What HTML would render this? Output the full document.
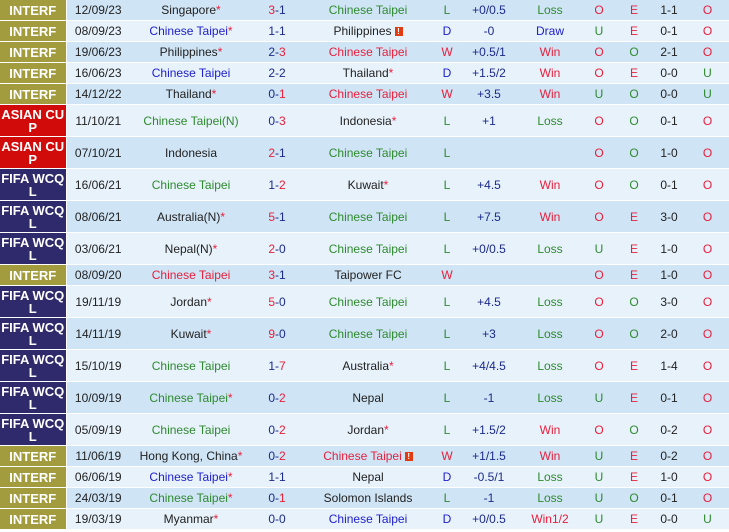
<!DOCTYPE html>
<html><head><meta charset="utf-8"><style>
body{margin:0;width:729px;height:532px;background:#fff;font-family:"Liberation Sans",Arial,sans-serif;font-size:12px;overflow:hidden}
table{border-collapse:collapse;table-layout:fixed;width:729px}
td{padding:0;text-align:center;border-bottom:1px solid #fff;white-space:nowrap;overflow:hidden;color:#222}
tr.s td{height:20px}
tr.d td{height:31px}
tr.a td{background:#cfe4f5}
tr.b td{background:#e7f2fb}
td.c{color:#fff;font-weight:bold;font-size:13px;line-height:13px;white-space:normal;border-right:1px solid #fff}
tr td.i{background:#a39c3f}
tr td.ac{background:#d10a0a}
tr td.f{background:#2e2a6b}
.bl{color:#2121cc}.gr{color:#2f8a2f}.rd{color:#e8203c}.nv{color:#1c2a8a}
.st{color:#e8203c}
.ic{display:inline-block;width:8px;height:9px;background:#e23b12;color:#fff;font-size:8px;line-height:9px;vertical-align:1px;margin-left:3px;font-weight:bold}
</style></head><body>
<table>
<colgroup><col style="width:66px"><col style="width:64px"><col style="width:122px"><col style="width:50px"><col style="width:132px"><col style="width:26px"><col style="width:58px"><col style="width:64px"><col style="width:34px"><col style="width:36px"><col style="width:34px"><col style="width:43px"></colgroup>
<tr class="s a"><td class="c i">INTERF</td><td>12/09/23</td><td>Singapore<span class="st">*</span></td><td><span class="rd">3</span><span class="nv">-1</span></td><td class="gr">Chinese Taipei</td><td class="gr">L</td><td class="nv">+0/0.5</td><td class="gr">Loss</td><td class="rd">O</td><td class="rd">E</td><td>1-1</td><td class="rd">O</td></tr>
<tr class="s b"><td class="c i">INTERF</td><td>08/09/23</td><td class="bl">Chinese Taipei<span class="st">*</span></td><td class="nv">1-1</td><td>Philippines<span class="ic">!</span></td><td class="bl">D</td><td class="nv">-0</td><td class="bl">Draw</td><td class="gr">U</td><td class="rd">E</td><td>0-1</td><td class="rd">O</td></tr>
<tr class="s a"><td class="c i">INTERF</td><td>19/06/23</td><td>Philippines<span class="st">*</span></td><td><span class="nv">2-</span><span class="rd">3</span></td><td class="rd">Chinese Taipei</td><td class="rd">W</td><td class="nv">+0.5/1</td><td class="rd">Win</td><td class="rd">O</td><td class="gr">O</td><td>2-1</td><td class="rd">O</td></tr>
<tr class="s b"><td class="c i">INTERF</td><td>16/06/23</td><td class="bl">Chinese Taipei</td><td class="nv">2-2</td><td>Thailand<span class="st">*</span></td><td class="bl">D</td><td class="nv">+1.5/2</td><td class="rd">Win</td><td class="rd">O</td><td class="rd">E</td><td>0-0</td><td class="gr">U</td></tr>
<tr class="s a"><td class="c i">INTERF</td><td>14/12/22</td><td>Thailand<span class="st">*</span></td><td><span class="nv">0-</span><span class="rd">1</span></td><td class="rd">Chinese Taipei</td><td class="rd">W</td><td class="nv">+3.5</td><td class="rd">Win</td><td class="gr">U</td><td class="gr">O</td><td>0-0</td><td class="gr">U</td></tr>
<tr class="d b"><td class="c ac">ASIAN CU P</td><td>11/10/21</td><td class="gr">Chinese Taipei(N)</td><td><span class="nv">0-</span><span class="rd">3</span></td><td>Indonesia<span class="st">*</span></td><td class="gr">L</td><td class="nv">+1</td><td class="gr">Loss</td><td class="rd">O</td><td class="gr">O</td><td>0-1</td><td class="rd">O</td></tr>
<tr class="d a"><td class="c ac">ASIAN CU P</td><td>07/10/21</td><td>Indonesia</td><td><span class="rd">2</span><span class="nv">-1</span></td><td class="gr">Chinese Taipei</td><td class="gr">L</td><td></td><td></td><td class="rd">O</td><td class="gr">O</td><td>1-0</td><td class="rd">O</td></tr>
<tr class="d b"><td class="c f">FIFA WCQ L</td><td>16/06/21</td><td class="gr">Chinese Taipei</td><td><span class="nv">1-</span><span class="rd">2</span></td><td>Kuwait<span class="st">*</span></td><td class="gr">L</td><td class="nv">+4.5</td><td class="rd">Win</td><td class="rd">O</td><td class="gr">O</td><td>0-1</td><td class="rd">O</td></tr>
<tr class="d a"><td class="c f">FIFA WCQ L</td><td>08/06/21</td><td>Australia(N)<span class="st">*</span></td><td><span class="rd">5</span><span class="nv">-1</span></td><td class="gr">Chinese Taipei</td><td class="gr">L</td><td class="nv">+7.5</td><td class="rd">Win</td><td class="rd">O</td><td class="rd">E</td><td>3-0</td><td class="rd">O</td></tr>
<tr class="d b"><td class="c f">FIFA WCQ L</td><td>03/06/21</td><td>Nepal(N)<span class="st">*</span></td><td><span class="rd">2</span><span class="nv">-0</span></td><td class="gr">Chinese Taipei</td><td class="gr">L</td><td class="nv">+0/0.5</td><td class="gr">Loss</td><td class="gr">U</td><td class="rd">E</td><td>1-0</td><td class="rd">O</td></tr>
<tr class="s a"><td class="c i">INTERF</td><td>08/09/20</td><td class="rd">Chinese Taipei</td><td><span class="rd">3</span><span class="nv">-1</span></td><td>Taipower FC</td><td class="rd">W</td><td></td><td></td><td class="rd">O</td><td class="rd">E</td><td>1-0</td><td class="rd">O</td></tr>
<tr class="d b"><td class="c f">FIFA WCQ L</td><td>19/11/19</td><td>Jordan<span class="st">*</span></td><td><span class="rd">5</span><span class="nv">-0</span></td><td class="gr">Chinese Taipei</td><td class="gr">L</td><td class="nv">+4.5</td><td class="gr">Loss</td><td class="rd">O</td><td class="gr">O</td><td>3-0</td><td class="rd">O</td></tr>
<tr class="d a"><td class="c f">FIFA WCQ L</td><td>14/11/19</td><td>Kuwait<span class="st">*</span></td><td><span class="rd">9</span><span class="nv">-0</span></td><td class="gr">Chinese Taipei</td><td class="gr">L</td><td class="nv">+3</td><td class="gr">Loss</td><td class="rd">O</td><td class="gr">O</td><td>2-0</td><td class="rd">O</td></tr>
<tr class="d b"><td class="c f">FIFA WCQ L</td><td>15/10/19</td><td class="gr">Chinese Taipei</td><td><span class="nv">1-</span><span class="rd">7</span></td><td>Australia<span class="st">*</span></td><td class="gr">L</td><td class="nv">+4/4.5</td><td class="gr">Loss</td><td class="rd">O</td><td class="rd">E</td><td>1-4</td><td class="rd">O</td></tr>
<tr class="d a"><td class="c f">FIFA WCQ L</td><td>10/09/19</td><td class="gr">Chinese Taipei<span class="st">*</span></td><td><span class="nv">0-</span><span class="rd">2</span></td><td>Nepal</td><td class="gr">L</td><td class="nv">-1</td><td class="gr">Loss</td><td class="gr">U</td><td class="rd">E</td><td>0-1</td><td class="rd">O</td></tr>
<tr class="d b"><td class="c f">FIFA WCQ L</td><td>05/09/19</td><td class="gr">Chinese Taipei</td><td><span class="nv">0-</span><span class="rd">2</span></td><td>Jordan<span class="st">*</span></td><td class="gr">L</td><td class="nv">+1.5/2</td><td class="rd">Win</td><td class="rd">O</td><td class="gr">O</td><td>0-2</td><td class="rd">O</td></tr>
<tr class="s a"><td class="c i">INTERF</td><td>11/06/19</td><td>Hong Kong, China<span class="st">*</span></td><td><span class="nv">0-</span><span class="rd">2</span></td><td class="rd">Chinese Taipei<span class="ic">!</span></td><td class="rd">W</td><td class="nv">+1/1.5</td><td class="rd">Win</td><td class="gr">U</td><td class="rd">E</td><td>0-2</td><td class="rd">O</td></tr>
<tr class="s b"><td class="c i">INTERF</td><td>06/06/19</td><td class="bl">Chinese Taipei<span class="st">*</span></td><td class="nv">1-1</td><td>Nepal</td><td class="bl">D</td><td class="nv">-0.5/1</td><td class="gr">Loss</td><td class="gr">U</td><td class="rd">E</td><td>1-0</td><td class="rd">O</td></tr>
<tr class="s a"><td class="c i">INTERF</td><td>24/03/19</td><td class="gr">Chinese Taipei<span class="st">*</span></td><td><span class="nv">0-</span><span class="rd">1</span></td><td>Solomon Islands</td><td class="gr">L</td><td class="nv">-1</td><td class="gr">Loss</td><td class="gr">U</td><td class="gr">O</td><td>0-1</td><td class="rd">O</td></tr>
<tr class="s b"><td class="c i">INTERF</td><td>19/03/19</td><td>Myanmar<span class="st">*</span></td><td class="nv">0-0</td><td class="bl">Chinese Taipei</td><td class="bl">D</td><td class="nv">+0/0.5</td><td class="rd">Win1/2</td><td class="gr">U</td><td class="rd">E</td><td>0-0</td><td class="gr">U</td></tr>
</table>
</body></html>
